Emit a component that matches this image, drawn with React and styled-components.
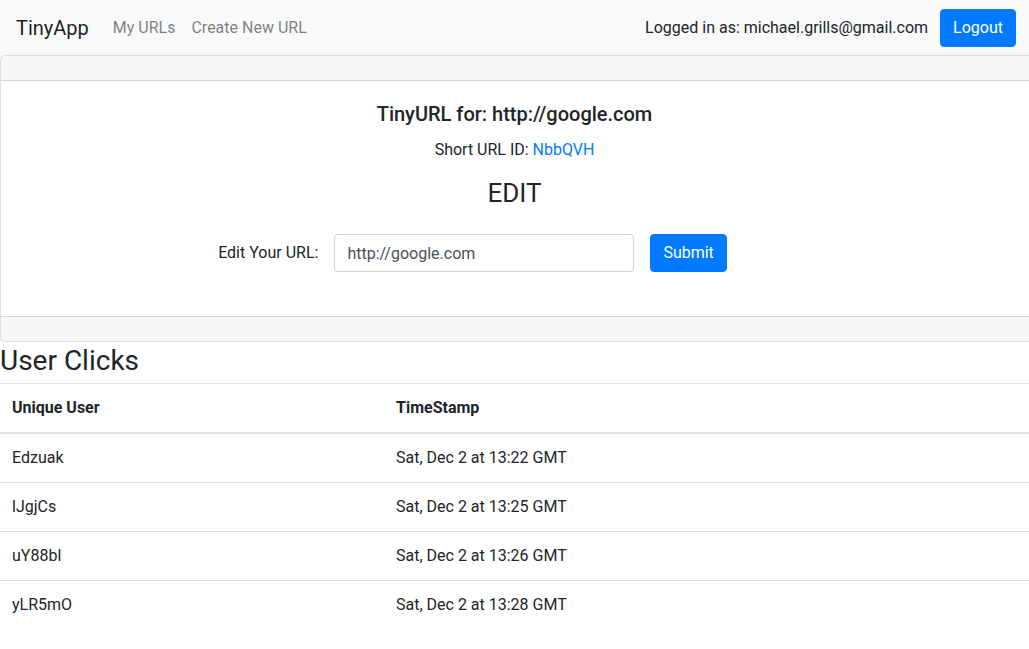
import React from 'react';
import styled, { createGlobalStyle } from 'styled-components';

const GlobalStyle = createGlobalStyle`
  * { box-sizing: border-box; }
  body {
    margin: 0;
    overflow-x: hidden;
    font-family: Roboto, "Liberation Sans", sans-serif;
    font-size: 16px;
    line-height: 1.5;
    color: #212529;
    background: #fff;
  }
`;

const clicks = [
  { user: 'Edzuak', time: 'Sat, Dec 2 at 13:22 GMT' },
  { user: 'lJgjCs', time: 'Sat, Dec 2 at 13:25 GMT' },
  { user: 'uY88bl', time: 'Sat, Dec 2 at 13:26 GMT' },
  { user: 'yLR5mO', time: 'Sat, Dec 2 at 13:28 GMT' },
];

const App = () => {
  return (
    <>
      <GlobalStyle />
      <Navbar>
        <Brand>TinyApp</Brand>
        <NavLink>My URLs</NavLink>
        <NavLink>Create New URL</NavLink>
        <NavRight>
          <span>Logged in as: michael.grills@gmail.com</span>
          <Button>Logout</Button>
        </NavRight>
      </Navbar>

      <Card>
        <CardHeader />
        <CardBody>
          <Title>TinyURL for: http://google.com</Title>
          <Text>
            Short URL ID: <Link>NbbQVH</Link>
          </Text>
          <EditHeading>EDIT</EditHeading>
          <EditForm>
            <label>Edit Your URL:</label>
            <Input defaultValue='http://google.com' />
            <Button>Submit</Button>
          </EditForm>
        </CardBody>
        <CardFooter />
      </Card>

      <SectionTitle>User Clicks</SectionTitle>
      <Table>
        <thead>
          <tr>
            <th>Unique User</th>
            <th>TimeStamp</th>
          </tr>
        </thead>
        <tbody>
          {clicks.map((c) => (
            <tr key={c.user}>
              <td>{c.user}</td>
              <td>{c.time}</td>
            </tr>
          ))}
        </tbody>
      </Table>
    </>
  );
};

const Navbar = styled.nav`
  display: flex;
  align-items: center;
  height: 55px;
  padding: 0 13px 0 16px;
  background: #f8f9fa;
`;

const Brand = styled.span`
  font-size: 20px;
  margin-right: 16px;
  color: rgba(0, 0, 0, 0.9);
`;

const NavLink = styled.span`
  padding: 8px;
  color: rgba(0, 0, 0, 0.5);
`;

const NavRight = styled.div`
  margin-left: auto;
  display: flex;
  align-items: center;
  gap: 12px;
`;

const Button = styled.button`
  font: inherit;
  color: #fff;
  background: #007bff;
  border: 1px solid #007bff;
  border-radius: 4px;
  height: 38px;
  padding: 0 12px;
`;

const Card = styled.div`
  margin-right: -4px;
  border: 1px solid rgba(0, 0, 0, 0.125);
  border-radius: 4px;
`;

const CardHeader = styled.div`
  height: 25px;
  background: rgba(0, 0, 0, 0.03);
  border-bottom: 1px solid rgba(0, 0, 0, 0.125);
`;

const CardFooter = styled(CardHeader)`
  border-bottom: none;
  border-top: 1px solid rgba(0, 0, 0, 0.125);
`;

const CardBody = styled.div`
  padding: 21px 24px 44px 20px;
  text-align: center;
`;

const Title = styled.h5`
  margin: 0 0 12px;
  font-size: 20px;
  font-weight: 500;
  line-height: 1.2;
`;

const Text = styled.p`
  margin: 0 0 16px;
`;

const Link = styled.a`
  color: #007bff;
`;

const EditHeading = styled.h3`
  margin: 0 0 25px;
  font-size: 26px;
  font-weight: 400;
  line-height: 1.2;
`;

const EditForm = styled.form`
  display: flex;
  justify-content: center;
  align-items: center;
  gap: 16px;
  padding-right: 84px;
`;

const Input = styled.input`
  width: 300px;
  height: 38px;
  padding: 6px 12px;
  font: inherit;
  color: #495057;
  border: 1px solid #ced4da;
  border-radius: 4px;
`;

const SectionTitle = styled.h3`
  margin: 0 0 5px;
  padding-top: 2px;
  font-size: 28px;
  font-weight: 400;
  line-height: 1.2;
`;

const Table = styled.table`
  width: 100%;
  border-collapse: collapse;
  text-align: left;

  th,
  td {
    padding: 12px;
    border-top: 1px solid #dee2e6;
    vertical-align: top;
  }

  th {
    font-weight: 700;
    border-bottom: 2px solid #dee2e6;
  }

  th:first-child {
    width: 384px;
  }
`;

export default App;
